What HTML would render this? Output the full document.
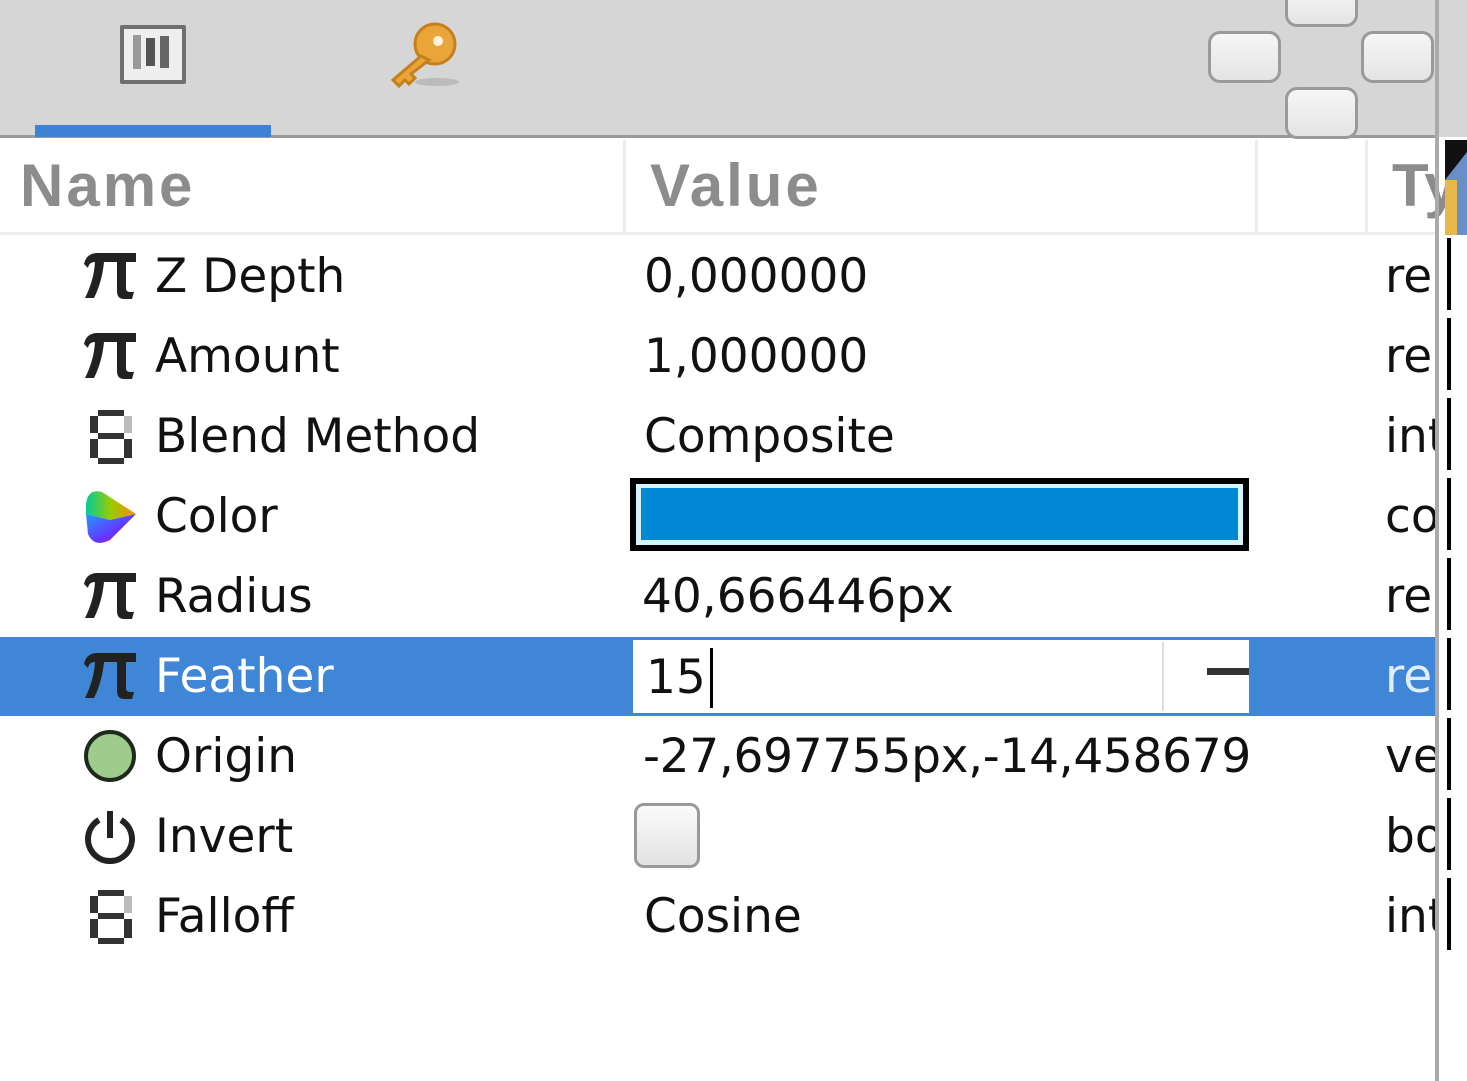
<!DOCTYPE html>
<html><head><meta charset="utf-8"><style>
*{margin:0;padding:0;box-sizing:border-box}
body{width:1467px;height:1081px;overflow:hidden;background:#fff;position:relative;font-family:"DejaVu Sans","Liberation Sans",sans-serif}
.a{position:absolute}
.t{position:absolute;font-size:47px;color:#111;line-height:1;white-space:nowrap;letter-spacing:0}
.btn{position:absolute;background:linear-gradient(#f6f6f6,#e4e4e4);border:3px solid #9a9a9a;border-radius:12px}
.h{font-family:'Liberation Sans',sans-serif;font-weight:bold;font-size:60px;color:#8c8c8c;letter-spacing:3px}
</style></head><body>
<svg width="0" height="0" style="position:absolute"><defs>
<symbol id="pi" viewBox="0 0 56 50"><path d="M2 14 Q4 4 14 3 L54 3 L54 12 L44 12 L44 38 Q44 42 48 42 L52 42 L50 49 L42 49 Q35 49 35 41 L35 12 L22 12 Q20 32 12 48 L3 48 Q12 30 13 12 Q7 12 6 18Z" fill="#222"/></symbol>
<symbol id="en" viewBox="0 0 50 58"><g fill="#333"><rect x="12" y="2" width="26" height="6"/><rect x="12" y="25" width="26" height="6"/><rect x="12" y="50" width="26" height="6"/><rect x="4" y="8" width="8" height="17"/><rect x="38" y="8" width="8" height="17" fill="#bbb"/><rect x="4" y="31" width="8" height="19"/><rect x="38" y="31" width="8" height="19"/></g></symbol>
</defs></svg>
<!-- toolbar -->
<div class="a" style="left:0;top:0;width:1437px;height:137px;background:#d6d6d6"></div>
<div class="a" style="left:0;top:135px;width:1437px;height:3px;background:#999"></div>
<div class="a" style="left:35px;top:125px;width:236px;height:12px;background:#3d83d4"></div>
<div class="a" style="left:120px;top:25px;width:66px;height:59px;border:4px solid #6f6f6f;background:#eee;border-radius:2px"></div>
<div class="a" style="left:133px;top:35px;width:8px;height:34px;background:#999"></div>
<div class="a" style="left:146px;top:38px;width:9px;height:28px;background:#555"></div>
<div class="a" style="left:160px;top:36px;width:9px;height:32px;background:#666"></div>
<svg class="a" style="left:385px;top:18px" width="80" height="75" viewBox="0 0 80 75">
<ellipse cx="52" cy="64" rx="22" ry="4" fill="#bbb"/>
<circle cx="50" cy="26" r="20" fill="#e9a53a" stroke="#c57f1b" stroke-width="3"/>
<circle cx="53" cy="23" r="5" fill="#fff3dd"/>
<path d="M36 38 L8 62 L14 68 L20 62 L24 66 L30 60 L26 56 L44 42Z" fill="#e9a53a" stroke="#c57f1b" stroke-width="3"/>
</svg>
<div class="btn" style="left:1285px;top:-15px;width:73px;height:42px"></div>
<div class="btn" style="left:1208px;top:31px;width:73px;height:52px"></div>
<div class="btn" style="left:1361px;top:31px;width:73px;height:52px"></div>
<div class="btn" style="left:1285px;top:87px;width:73px;height:52px"></div>
<!-- header -->
<div class="a" style="left:623px;top:140px;width:3px;height:95px;background:#ececec"></div>
<div class="a" style="left:1255px;top:140px;width:3px;height:95px;background:#ececec"></div>
<div class="a" style="left:1365px;top:140px;width:3px;height:95px;background:#ececec"></div>
<div class="a" style="left:0;top:232px;width:1437px;height:3px;background:#ececec"></div>
<div class="t h" style="left:20px;top:156px">Name</div>
<div class="t h" style="left:650px;top:156px">Value</div>
<div class="t h" style="left:1392px;top:156px;letter-spacing:0">Ty</div>
<!-- selected row -->
<div class="a" style="left:0;top:637px;width:1437px;height:79px;background:#3f86d6"></div>
<div class="a" style="left:633px;top:640px;width:616px;height:73px;background:#fff"></div>
<div class="a" style="left:1162px;top:642px;width:2px;height:69px;background:#ddd"></div>
<div class="a" style="left:1207px;top:668px;width:42px;height:7px;background:#333"></div>
<div class="a" style="left:710px;top:648px;width:3px;height:60px;background:#000"></div>
<!-- color swatch -->
<div class="a" style="left:630px;top:478px;width:619px;height:73px;background:#000"></div>
<div class="a" style="left:636px;top:484px;width:607px;height:61px;background:#d6f4ff"></div>
<div class="a" style="left:641px;top:488px;width:597px;height:52px;background:#0088d5"></div>
<!-- checkbox -->
<div class="a" style="left:634px;top:803px;width:66px;height:65px;border:3px solid #999;border-radius:10px;background:linear-gradient(#fafafa,#e2e2e2)"></div>
<!-- icons -->
<svg class="a" style="left:82px;top:250px" width="56" height="50"><use href="#pi"/></svg>
<svg class="a" style="left:82px;top:330px" width="56" height="50"><use href="#pi"/></svg>
<svg class="a" style="left:82px;top:570px" width="56" height="50"><use href="#pi"/></svg>
<svg class="a" style="left:82px;top:650px" width="56" height="50"><use href="#pi"/></svg>
<svg class="a" style="left:86px;top:408px" width="50" height="58"><use href="#en"/></svg>
<svg class="a" style="left:86px;top:888px" width="50" height="58"><use href="#en"/></svg>
<svg class="a" style="left:80px;top:484px" width="60" height="62" viewBox="0 0 60 62"><defs><linearGradient id="g1" x1="0" y1="0" x2="1" y2="0"><stop offset="0" stop-color="#0c9"/><stop offset=".5" stop-color="#9c0"/><stop offset="1" stop-color="#f80"/></linearGradient><linearGradient id="g2" x1="0" y1="0" x2="1" y2="1"><stop offset="0" stop-color="#29f"/><stop offset=".6" stop-color="#63f"/><stop offset="1" stop-color="#f06"/></linearGradient></defs>
<path d="M6 20 Q8 4 22 8 L56 30 L30 36 L6 30Z" fill="url(#g1)"/><path d="M6 30 L30 36 L56 30 L30 56 Q14 64 8 50Z" fill="url(#g2)"/></svg>
<svg class="a" style="left:82px;top:728px" width="56" height="56"><circle cx="28" cy="28" r="24" fill="#9fcc8c" stroke="#1e2a1e" stroke-width="4"/></svg>
<svg class="a" style="left:82px;top:808px" width="56" height="56" viewBox="0 0 56 56"><path d="M17 12 A22 22 0 1 0 39 12" fill="none" stroke="#222" stroke-width="6"/><rect x="25" y="3" width="6" height="27" fill="#222"/></svg>
<!-- names -->
<div class="t" style="left:155px;top:253px">Z Depth</div>
<div class="t" style="left:155px;top:333px">Amount</div>
<div class="t" style="left:155px;top:413px">Blend Method</div>
<div class="t" style="left:155px;top:493px">Color</div>
<div class="t" style="left:155px;top:573px">Radius</div>
<div class="t" style="left:155px;top:653px;color:#fff">Feather</div>
<div class="t" style="left:155px;top:733px">Origin</div>
<div class="t" style="left:155px;top:813px">Invert</div>
<div class="t" style="left:155px;top:893px">Falloff</div>
<!-- values -->
<div class="t" style="left:644px;top:253px">0,000000</div>
<div class="t" style="left:644px;top:333px">1,000000</div>
<div class="t" style="left:644px;top:413px">Composite</div>
<div class="t" style="left:642px;top:573px">40,666446px</div>
<div class="t" style="left:646px;top:654px">15</div>
<div class="t" style="left:643px;top:733px;letter-spacing:-0.3px">-27,697755px,-14,458679</div>
<div class="t" style="left:644px;top:893px">Cosine</div>
<!-- type column clipped -->
<div class="a" style="left:1385px;top:240px;width:52px;height:720px;overflow:hidden">
<div class="t" style="left:0;top:13px">re</div>
<div class="t" style="left:0;top:93px">re</div>
<div class="t" style="left:0;top:173px">int</div>
<div class="t" style="left:0;top:253px">co</div>
<div class="t" style="left:0;top:333px">re</div>
<div class="t" style="left:0;top:413px;color:#dfeeff">re</div>
<div class="t" style="left:0;top:493px">ve</div>
<div class="t" style="left:0;top:573px">bo</div>
<div class="t" style="left:0;top:653px">int</div>
</div>
<!-- right edge -->
<div class="a" style="left:1435px;top:0;width:4px;height:1081px;background:#aaa"></div>
<div class="a" style="left:1439px;top:0;width:28px;height:137px;background:#d6d6d6"></div>
<div class="a" style="left:1445px;top:140px;width:22px;height:95px;background:#6a8fc8"></div>
<div class="a" style="left:1445px;top:140px;width:22px;height:40px;background:#111;clip-path:polygon(0 0,100% 0,100% 30%,0 100%)"></div>
<div class="a" style="left:1445px;top:180px;width:12px;height:55px;background:#e6b84a"></div>
<div class="a" style="left:1447px;top:238px;width:4px;height:715px;background:repeating-linear-gradient(#000 0 72px,#fff 72px 80px)"></div>
</body></html>
